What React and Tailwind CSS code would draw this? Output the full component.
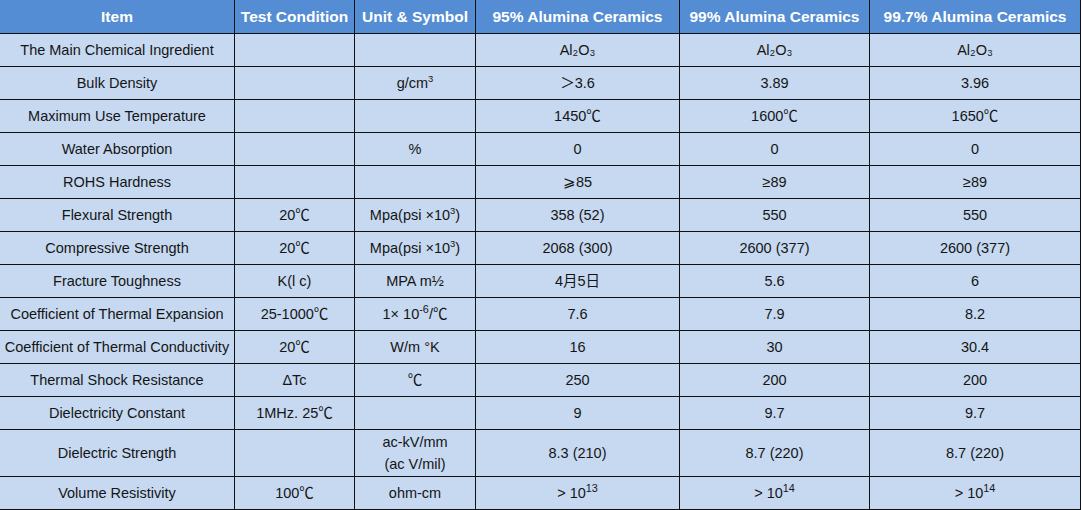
import React from 'react';

const headers = [
  'Item',
  'Test Condition',
  'Unit & Symbol',
  '95% Alumina Ceramics',
  '99% Alumina Ceramics',
  '99.7% Alumina Ceramics',
];

// small superscripts (units) vs. normal ones (exponents)
const Sup = ({ children }) => <sup className="text-[0.65em] -top-[0.6em]">{children}</sup>;
const Exp = ({ children }) => <sup className="text-[0.75em] -top-[0.5em]">{children}</sup>;

const rows = [
  ['The Main Chemical Ingredient', '', '', 'Al₂O₃', 'Al₂O₃', 'Al₂O₃'],
  ['Bulk Density', '', <>g/cm<Sup>3</Sup></>, '＞3.6', '3.89', '3.96'],
  ['Maximum Use Temperature', '', '', '1450℃', '1600℃', '1650℃'],
  ['Water Absorption', '', '%', '0', '0', '0'],
  ['ROHS Hardness', '', '', '⩾85', '≥89', '≥89'],
  ['Flexural Strength', '20℃', <>Mpa(psi ×10<Sup>3</Sup>)</>, '358 (52)', '550', '550'],
  ['Compressive Strength', '20℃', <>Mpa(psi ×10<Sup>3</Sup>)</>, '2068 (300)', '2600 (377)', '2600 (377)'],
  ['Fracture Toughness', 'K(l c)', 'MPA m½', '4月5日', '5.6', '6'],
  ['Coefficient of Thermal Expansion', '25-1000℃', <>1× 10<Exp>-6</Exp>/℃</>, '7.6', '7.9', '8.2'],
  ['Coefficient of Thermal Conductivity', '20℃', 'W/m °K', '16', '30', '30.4'],
  ['Thermal Shock Resistance', 'ΔTc', '℃', '250', '200', '200'],
  ['Dielectricity Constant', '1MHz. 25℃', '', '9', '9.7', '9.7'],
  ['Dielectric Strength', '', <>ac-kV/mm<br />(ac V/mil)</>, '8.3 (210)', '8.7 (220)', '8.7 (220)'],
  ['Volume Resistivity', '100℃', 'ohm-cm', <>&gt; 10<Exp>13</Exp></>, <>&gt; 10<Exp>14</Exp></>, <>&gt; 10<Exp>14</Exp></>],
];

const Cell = ({ children, head, tall }) => (
  <div
    className={`flex items-center justify-center text-center border-r border-b border-[#111] whitespace-nowrap ${
      head
        ? 'h-[34px] bg-[#548dd4] text-white font-bold text-[15.5px]'
        : `${tall ? 'h-[47px] leading-[22px]' : 'h-[33px] pt-px'} bg-[#c6d9f1] text-[#151515] text-[14.5px]`
    }`}
  >
    <span>{children}</span>
  </div>
);

export default function App() {
  return (
    <div className="w-[1082px] h-[510px] bg-white overflow-hidden" style={{ fontFamily: '"Liberation Sans", Arial, "Noto Sans CJK SC", sans-serif' }}>
      <div className="grid grid-cols-[235px_120px_121px_204px_190px_211px] w-[1081px]">
        {headers.map((h) => (
          <Cell key={h} head>{h}</Cell>
        ))}
        {rows.map((row, i) =>
          row.map((c, j) => (
            <Cell key={`${i}-${j}`} tall={i === 12}>{c}</Cell>
          ))
        )}
      </div>
    </div>
  );
}
